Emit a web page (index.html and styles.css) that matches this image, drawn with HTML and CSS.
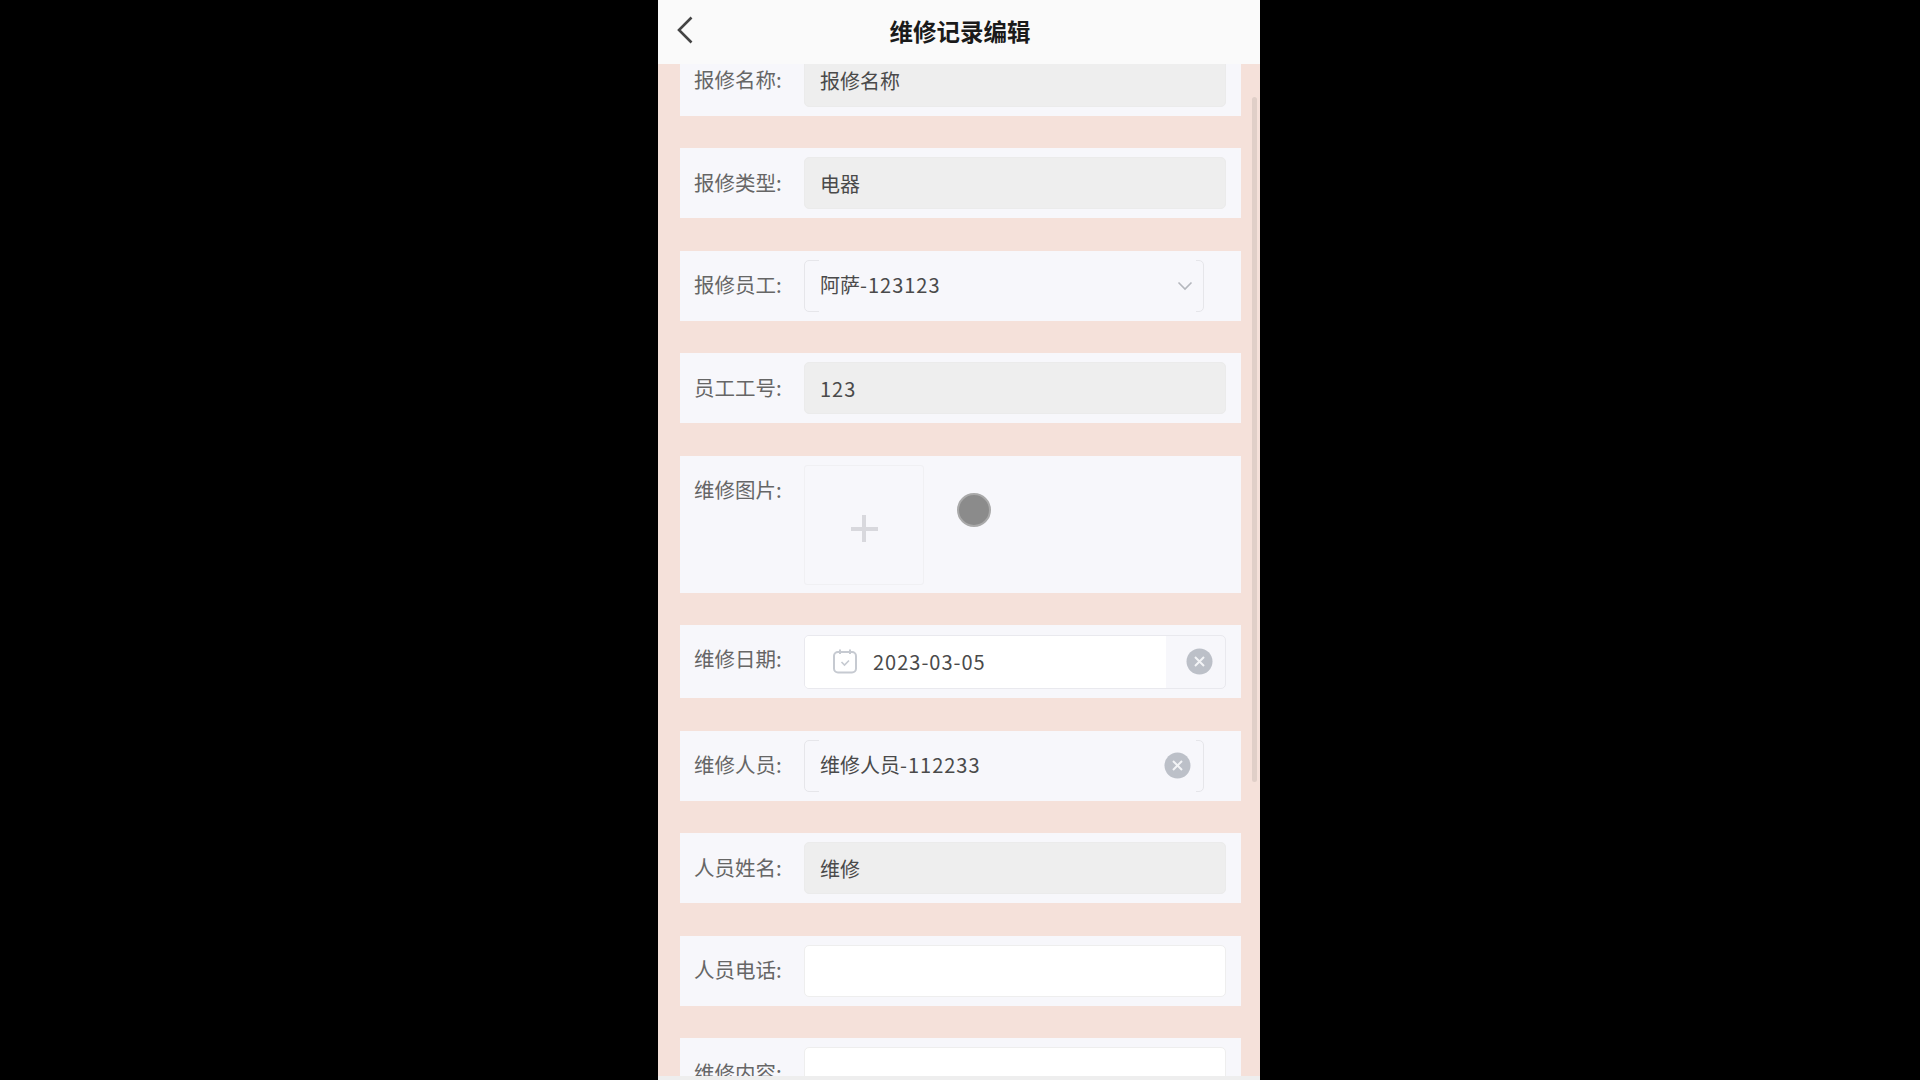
FILE: index.html
```html
<!DOCTYPE html>
<html lang="zh-CN">
<head>
    <meta charset="UTF-8">
    <meta name="viewport" content="width=device-width, initial-scale=1.0">
    <title>维修记录编辑</title>
    <link rel="stylesheet" href="styles.css">
</head>
<body>
    <div class="phone">
        <header class="nav-bar">
            <svg class="back-icon" width="16" height="28" viewBox="0 0 16 28"><path d="M14.5 1.5 L2 14 L14.5 26.5" fill="none" stroke="#444" stroke-width="2.6"/></svg>
            <h1>维修记录编辑</h1>
        </header>

        <div class="scroll-thumb"></div>

        <main class="form-list">
            <div class="form-row">
                <label>报修名称:</label>
                <div class="field field-disabled">报修名称</div>
            </div>
            <div class="form-row">
                <label>报修类型:</label>
                <div class="field field-disabled">电器</div>
            </div>
            <div class="form-row">
                <label>报修员工:</label>
                <div class="field field-picker">
                    <span class="picker-text">阿萨<span class="num">-123123</span></span>
                    <svg class="chevron" width="16" height="10" viewBox="0 0 16 10"><path d="M1.5 1.5 L8 8 L14.5 1.5" fill="none" stroke="#b4b7bd" stroke-width="1.6"/></svg>
                </div>
            </div>
            <div class="form-row">
                <label>员工工号:</label>
                <div class="field field-disabled"><span class="num">123</span></div>
            </div>
            <div class="form-row form-row-upload">
                <label>维修图片:</label>
                <div class="upload-box"><span class="plus"></span></div>
                <div class="gray-dot"></div>
            </div>
            <div class="form-row form-row-date">
                <label>维修日期:</label>
                <div class="field field-date">
                    <div class="date-value">
                        <svg class="calendar" width="26" height="26" viewBox="0 0 26 26">
                            <rect x="2" y="4" width="22" height="20.5" rx="4" fill="none" stroke="#c6cad1" stroke-width="2"/>
                            <path d="M8 1.5 V6 M18 1.5 V6" stroke="#c6cad1" stroke-width="2"/>
                            <path d="M9.5 14 L12.5 17 L17 12.5" fill="none" stroke="#c6cad1" stroke-width="1.6"/>
                        </svg>
                        <span class="num">2023-03-05</span>
                    </div>
                    <div class="date-clear">
                        <svg class="clear-icon" width="27" height="27" viewBox="0 0 27 27"><circle cx="13.5" cy="13.5" r="13" fill="#bcc0c8"/><path d="M9 9 L18 18 M18 9 L9 18" stroke="#f3f4f6" stroke-width="2"/></svg>
                    </div>
                </div>
            </div>
            <div class="form-row">
                <label>维修人员:</label>
                <div class="field field-picker">
                    <span class="picker-text">维修人员<span class="num">-112233</span></span>
                    <svg class="clear-icon picker-clear" width="27" height="27" viewBox="0 0 27 27"><circle cx="13.5" cy="13.5" r="13" fill="#bcc0c8"/><path d="M9 9 L18 18 M18 9 L9 18" stroke="#f3f4f6" stroke-width="2"/></svg>
                </div>
            </div>
            <div class="form-row">
                <label>人员姓名:</label>
                <div class="field field-disabled">维修</div>
            </div>
            <div class="form-row">
                <label>人员电话:</label>
                <div class="field field-white"></div>
            </div>
            <div class="form-row">
                <label>维修内容:</label>
                <div class="field field-white"></div>
            </div>
        </main>

        <div class="bottom-edge"></div>
    </div>
</body>
</html>
```

FILE: styles.css
```css
* {
    box-sizing: border-box;
}
html, body {
    height: 100%;
}
body {
    margin: 0;
    padding-right: 2px;
    background: #000;
    display: flex;
    justify-content: center;
    overflow: hidden;
    font-family: "Noto Sans CJK SC", "Noto Sans", sans-serif;
    font-size: 20px;
}
.phone {
    position: relative;
    width: 602px;
    height: 1080px;
    overflow: hidden;
    background: #f5e1da;
}
.nav-bar {
    position: relative;
    z-index: 2;
    height: 64px;
    padding-bottom: 2px;
    background: #fafafa;
    display: flex;
    align-items: center;
    justify-content: center;
}
.nav-bar h1 {
    margin: 0;
    padding-left: 2px;
    font-size: 23.5px;
    font-weight: 700;
    color: #1a1a1a;
}
.back-icon {
    position: absolute;
    left: 19px;
    top: 16px;
}
.scroll-thumb {
    position: absolute;
    z-index: 1;
    right: 3px;
    top: 97px;
    width: 5px;
    height: 685px;
    border-radius: 3px;
    background: #e0cfc8;
}
.form-list {
    margin-top: -18.5px;
    padding: 0 19px 0 22px;
    display: flex;
    flex-direction: column;
    gap: 32.5px;
}
.form-row {
    display: flex;
    align-items: center;
    height: 70px;
    padding-left: 14px;
    background: #f7f7fb;
}
.form-row label {
    flex: none;
    width: 110px;
    padding-bottom: 3px;
    font-size: 20.5px;
    color: #666;
    line-height: 28px;
}
.field {
    display: flex;
    align-items: center;
    width: 422px;
    height: 52px;
    padding: 0 15px;
    border-radius: 5px;
    color: #4a4a4a;
}
.num {
    letter-spacing: 1px;
}
.field-disabled {
    background: #eeeeee;
    border: 1px solid #ebebeb;
}
.field-white {
    background: #fff;
    border: 1px solid #eeeeee;
}
.field-picker {
    position: relative;
    width: 400px;
    justify-content: space-between;
    padding: 0 8px 0 15px;
    border: 1px solid #e6e6ea;
}
/* top and bottom border only shows near the corners */
.field-picker::before {
    content: "";
    position: absolute;
    left: 14px;
    right: 7px;
    top: -1px;
    bottom: -1px;
    border-top: 1px solid #f7f7fb;
    border-bottom: 1px solid #f7f7fb;
}
.picker-text {
    margin-top: -3px;
}
.chevron {
    margin-right: 2px;
}
.picker-clear {
    margin-right: 4px;
}
.form-row-upload {
    height: 137px;
    align-items: flex-start;
    padding-top: 9px;
}
.form-row-upload label {
    margin-top: 10px;
}
.upload-box {
    flex: none;
    display: flex;
    align-items: center;
    justify-content: center;
    width: 120px;
    height: 120px;
    border: 1px solid #f0f0f3;
    border-radius: 3px;
    padding-top: 8px;
}
.plus {
    width: 27px;
    height: 27px;
    background:
        linear-gradient(#d8d8dd, #d8d8dd) center / 27px 4px no-repeat,
        linear-gradient(#d8d8dd, #d8d8dd) center / 4px 27px no-repeat;
}
.gray-dot {
    flex: none;
    width: 34px;
    height: 34px;
    margin: 28px 0 0 33px;
    border-radius: 50%;
    background: #8b8b8b;
    border: 2px solid #a9a9a9;
}
.form-row-date {
    height: 73px;
}
.form-row-date label {
    margin-top: -4px;
}
.field-date {
    height: 54px;
    padding: 0;
    overflow: hidden;
    background: #f7f7fb;
    border: 1px solid #e9e9ee;
}
.date-value {
    display: flex;
    align-items: center;
    width: 361px;
    height: 100%;
    padding: 0 0 0 27px;
    background: #fff;
}
.calendar {
    margin: -2px 15px 0 0;
}
.date-clear {
    flex: 1;
    display: flex;
    justify-content: center;
    padding-left: 8px;
}
.bottom-edge {
    position: absolute;
    z-index: 2;
    left: 0;
    right: 0;
    bottom: 0;
    height: 4px;
    background: #eeeeee;
}
```
